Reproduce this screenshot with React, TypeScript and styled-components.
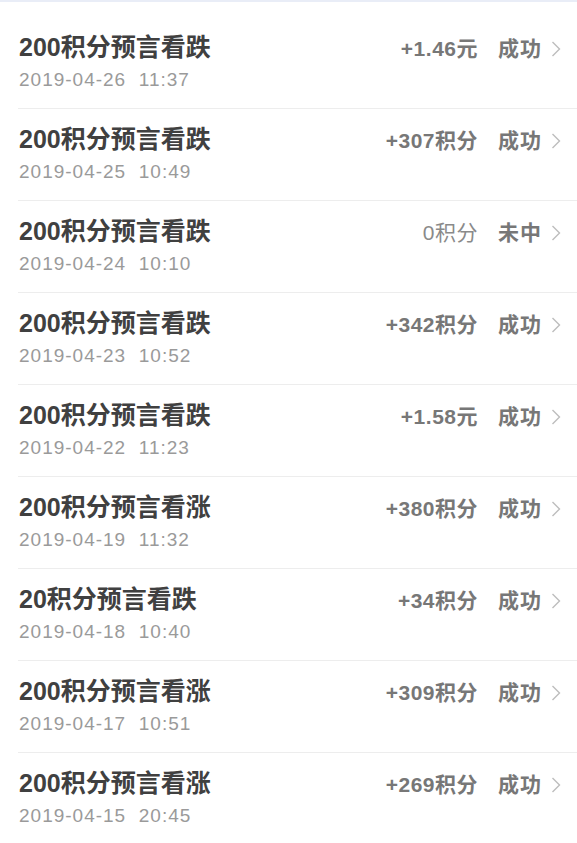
import React from "react";
import styled, { createGlobalStyle } from "styled-components";

const GlobalStyle = createGlobalStyle`
  body {
    margin: 0;
    background: #fff;
    font-family: "Liberation Sans", "Noto Sans CJK SC", sans-serif;
  }
`;

const Page = styled.div`
  border-top: 2px solid #e9edf7;
  padding-top: 15px;
  background: #fff;
`;

const Row = styled.div`
  display: flex;
  align-items: flex-start;
  margin-left: 18px;
  padding: 14px 16px 14px 1px;
  border-bottom: 1px solid #ededed;
`;

const Info = styled.div`
  flex: 1;
  display: flex;
  flex-direction: column;
`;

const Title = styled.div`
  font-size: 25px;
  font-weight: bold;
  line-height: 32px;
  color: #404040;
`;

const Time = styled.div`
  margin-top: 3px;
  font-size: 19px;
  letter-spacing: 1px;
  line-height: 28px;
  color: #9a9a9a;
  white-space: pre;
`;

const Side = styled.div`
  display: flex;
  align-items: center;
  height: 32px;
`;

const Amount = styled.span<{ $plain?: boolean }>`
  font-size: 21px;
  font-weight: ${(p) => (p.$plain ? "normal" : "bold")};
  letter-spacing: 0.5px;
  color: ${(p) => (p.$plain ? "#8a8a8a" : "#777")};
  margin-right: 20px;
`;

const Status = styled.span`
  font-size: 21px;
  font-weight: bold;
  letter-spacing: 1px;
  color: #777;
  margin-right: 9px;
`;

const ChevronBox = styled.span`
  display: flex;
  margin-top: 3px;
`;

const Chevron = () => (
  <ChevronBox>
    <svg width="10" height="18" viewBox="0 0 10 18">
      <path d="M1.5 2 L8.5 9 L1.5 16" fill="none" stroke="#bdbdbd" strokeWidth="1.4" />
    </svg>
  </ChevronBox>
);

type Record = {
  title: string;
  date: string;
  time: string;
  amount: string;
  status: string;
  plain?: boolean;
};

const records: Record[] = [
  { title: "200积分预言看跌", date: "2019-04-26", time: "11:37", amount: "+1.46元", status: "成功" },
  { title: "200积分预言看跌", date: "2019-04-25", time: "10:49", amount: "+307积分", status: "成功" },
  { title: "200积分预言看跌", date: "2019-04-24", time: "10:10", amount: "0积分", status: "未中", plain: true },
  { title: "200积分预言看跌", date: "2019-04-23", time: "10:52", amount: "+342积分", status: "成功" },
  { title: "200积分预言看跌", date: "2019-04-22", time: "11:23", amount: "+1.58元", status: "成功" },
  { title: "200积分预言看涨", date: "2019-04-19", time: "11:32", amount: "+380积分", status: "成功" },
  { title: "20积分预言看跌", date: "2019-04-18", time: "10:40", amount: "+34积分", status: "成功" },
  { title: "200积分预言看涨", date: "2019-04-17", time: "10:51", amount: "+309积分", status: "成功" },
  { title: "200积分预言看涨", date: "2019-04-15", time: "20:45", amount: "+269积分", status: "成功" },
];

export default function App() {
  return (
    <Page>
      <GlobalStyle />
      {records.map((r, i) => (
        <Row key={i}>
          <Info>
            <Title>{r.title}</Title>
            <Time>{`${r.date}  ${r.time}`}</Time>
          </Info>
          <Side>
            <Amount $plain={r.plain}>{r.amount}</Amount>
            <Status>{r.status}</Status>
            <Chevron />
          </Side>
        </Row>
      ))}
    </Page>
  );
}
